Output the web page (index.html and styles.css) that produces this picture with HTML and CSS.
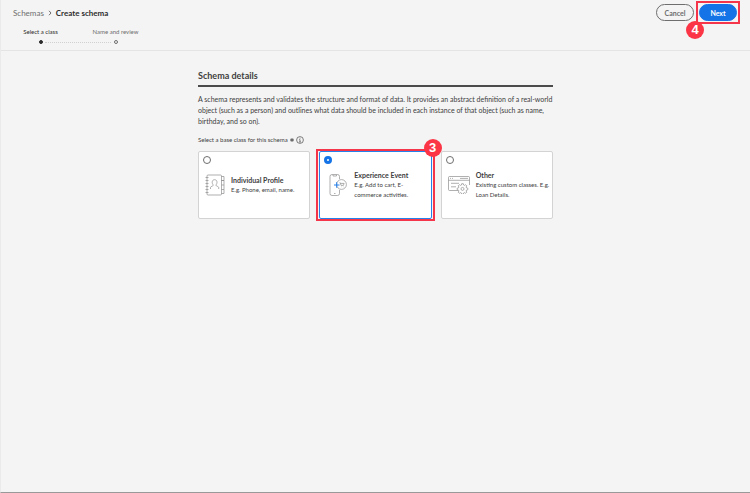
FILE: index.html
```html
<!DOCTYPE html>
<html lang="en">
<head>
    <meta charset="UTF-8">
    <meta name="viewport" content="width=device-width, initial-scale=1.0">
    <title>Create schema</title>
    <link rel="stylesheet" href="styles.css">
</head>
<body>
    <header class="header">
        <div>
            <nav class="breadcrumbs">
                <a href="#">Schemas</a>
                <svg class="chevron" viewBox="0 0 4 6"><path d="M1 .8 3 3 1 5.2"/></svg>
                <h1>Create schema</h1>
            </nav>
            <ol class="steps">
                <li class="step current">Select a class<span class="dot"></span></li>
                <li class="step">Name and review<span class="dot"></span></li>
            </ol>
        </div>
        <div class="actions">
            <button type="button" class="button">Cancel</button>
            <div class="highlight">
                <button type="button" class="button primary">Next</button>
                <span class="badge badge-next">4</span>
            </div>
        </div>
    </header>

    <main class="content">
        <h2>Schema details</h2>
        <p class="intro">A schema represents and validates the structure and format of data. It provides an abstract definition of a real-world object (such as a person) and outlines what data should be included in each instance of that object (such as name, birthday, and so on).</p>

        <form>
            <div class="field-label" id="classLabel">
                Select a base class for this schema
                <svg class="required" viewBox="0 0 4 4"><path d="M2 0v4M.2 1.200l3.600 1.600M3.800 1.200.2 2.800"/></svg>
                <svg class="info" viewBox="0 0 8 8"><circle cx="4" cy="4" r="3.4"/><path d="M4 3.6V6M3.3 3.6H4M3.2 6h1.6M4 1.8v.8"/></svg>
            </div>
            <div class="cards" role="radiogroup" aria-labelledby="classLabel">
                <label class="card">
                    <input type="radio" name="class" value="profile">
                    <span class="card-body">
                        <svg class="icon icon-profile" viewBox="0 0 20 22">
                            <rect x="2" y="1" width="14.5" height="20" rx="1"/>
                            <path d="M.5 3.5h3M.5 6.5h3M.5 9.5h3M.5 12.5h3M.5 15.5h3M.5 18.5h3"/>
                            <path d="M16.5 2.500h2.500v4h-2.500M16.500 6.500h2.500v4.500h-2.500M19 11v4.500h-2.500M19 15.500v4h-2.500"/>
                            <path d="M5.500 15v-1.500c0-1.200 2.700-1.200 2.700-2.200 0-.8-1-1.300-1-3 0-1.600.9-2.600 2.400-2.600s2.400 1 2.400 2.600c0 1.700-1 2.200-1 3 0 1 2.700 1 2.700 2.200V15"/>
                        </svg>
                        <span>
                            <strong>Individual Profile</strong>
                            <span class="description">E.g. Phone, email, name.</span>
                        </span>
                    </span>
                </label>
                <div class="selected">
                    <label class="card">
                        <input type="radio" name="class" value="event" checked>
                        <span class="card-body">
                            <svg class="icon icon-event" viewBox="0 0 18 22">
                                <path d="M10.500 5V2.500Q10.500.5 8.500.5H3Q1 .5 1 2.500v17q0 2 2 2h5.500q2 0 2-2V16"/>
                                <path d="M4 1v1h3.500V1M5 19.500h1.500"/>
                                <circle cx="12.500" cy="10.500" r="4.900"/>
                                <path d="M10.500 8.800h.8l.7 2.600h2.400l.7-2h-3.400M12.200 12.900h.4M14 12.900h.4"/>
                                <path class="plus" d="M5 11h5.500M7.700 8.200v5.600"/>
                            </svg>
                            <span>
                                <strong>Experience Event</strong>
                                <span class="description">E.g. Add to cart, E-commerce activities.</span>
                            </span>
                        </span>
                    </label>
                    <span class="badge badge-card">3</span>
                </div>
                <label class="card">
                    <input type="radio" name="class" value="other">
                    <span class="card-body">
                        <svg class="icon icon-other" viewBox="0 0 22 18">
                            <path d="M10 14.500H1.500q-1 0-1-1V1.500q0-1 1-1h19q1 0 1 1V9M.5 4.300h21M2 2.400h1M4 2.400h1M12 2.400h8M3 7.300h8M3 10.800h5"/>
                            <circle cx="14.500" cy="12.900" r="1.500"/>
                            <path d="M13.700 8.700h1.600l.3 1.300.9.400 1.200-.7 1.100 1.100-.7 1.200.4.900 1.300.3v1.600l-1.300.3-.4.900.7 1.200-1.100 1.100-1.200-.7-.9.400-.3 1.300h-1.600l-.3-1.300-.9-.4-1.200.7-1.100-1.100.7-1.200-.4-.9-1.300-.3v-1.600l1.300-.3.4-.9-.7-1.200 1.100-1.100 1.200.7.900-.4z" transform="translate(0 -1)"/>
                        </svg>
                        <span>
                            <strong>Other</strong>
                            <span class="description">Existing custom classes. E.g. Loan Details.</span>
                        </span>
                    </span>
                </label>
            </div>
        </form>
    </main>
</body>
</html>
```
FILE: styles.css
```css
* {
    box-sizing: border-box;
}

body {
    margin: 0;
    min-height: 100vh;
    font-family: Lato, "Open Sans", sans-serif;
    font-size: 6px;
    line-height: 10px;
    color: #404040;
    background-color: #f4f4f4;
    border-left: 1px solid #eaeaea;
    border-bottom: 1px solid #999;
}

h1, h2, p, ol {
    margin: 0;
    padding: 0;
}

svg {
    fill: none;
    stroke: #6e6e6e;
    flex-shrink: 0;
}

/* Header */
.header {
    display: flex;
    justify-content: space-between;
    height: 51px;
    border-bottom: 1px solid #e4e4e4;
}

.breadcrumbs {
    display: flex;
    align-items: center;
    gap: 4px;
    padding: 8px 0 0 12px;
    font-size: 8px;
}

.breadcrumbs a {
    color: #6e6e6e;
    text-decoration: none;
}

.breadcrumbs h1 {
    font-size: 8px;
    color: #2c2c2c;
}

.chevron {
    width: 4px;
    height: 6px;
}

.steps {
    display: flex;
    list-style: none;
    padding: 9px 0 0 2px;
}

.step {
    position: relative;
    width: 75px;
    text-align: center;
    color: #6e6e6e;
}

.step.current {
    color: #2c2c2c;
}

.dot {
    display: block;
    width: 4px;
    height: 4px;
    margin: 3px auto 0;
    border: 1px solid #6e6e6e;
    border-radius: 50%;
}

.current .dot {
    background-color: #2c2c2c;
    border-color: #2c2c2c;
}

/* dotted track to the next step */
.current::after {
    content: "";
    position: absolute;
    left: 42px;
    bottom: 1px;
    width: 66px;
    border-top: 1px dotted #d0d0d0;
}

.actions {
    display: flex;
    align-items: flex-start;
    gap: 2px;
    padding: 1px 10px 0 0;
}

.button {
    display: block;
    width: 38px;
    height: 17px;
    padding: 0;
    font-family: inherit;
    font-size: 7px;
    font-weight: bold;
    line-height: 10px;
    color: #6e6e6e;
    background-color: transparent;
    border: 1px solid #6e6e6e;
    border-radius: 9px;
    cursor: pointer;
}

.actions > .button {
    margin-top: 3px;
}

.primary {
    color: white;
    background-color: #1473e6;
    border-color: #1473e6;
}

/* Red callouts */
.highlight {
    position: relative;
    padding: 1px;
    border: 2px solid #f5364a;
}

.badge {
    position: absolute;
    width: 18px;
    height: 18px;
    border-radius: 50%;
    background-color: #fb3545;
    color: white;
    font-family: "Liberation Sans", Arial, sans-serif;
    font-size: 13px;
    font-weight: bold;
    line-height: 18px;
    text-align: center;
}

.badge-next {
    left: -12px;
    top: 18px;
}

.badge-card {
    right: -10px;
    top: -12px;
}

/* Content */
.content {
    max-width: 355px;
    margin: 0 auto;
    padding-top: 18px;
}

.content h2 {
    padding-bottom: 2px;
    font-size: 9px;
    line-height: 14px;
    border-bottom: 2px solid #4b4b4b;
}

.intro {
    padding-top: 7px;
    font-size: 7px;
    line-height: 11px;
}

.field-label {
    display: flex;
    align-items: center;
    gap: 2px;
    padding: 8px 0 6px;
}

.required {
    width: 4px;
    height: 4px;
    stroke: #4b4b4b;
    stroke-width: 0.8;
}

.info {
    width: 8px;
    height: 8px;
    stroke: #4b4b4b;
    stroke-width: 0.7;
}

.cards {
    display: grid;
    grid-template-columns: repeat(3, 1fr);
    gap: 9px;
}

.card {
    display: block;
    height: 68px;
    padding: 4px 2px 4px 4px;
    background-color: white;
    border: 1px solid #d3d3d3;
    border-radius: 2px;
    cursor: pointer;
}

.card input {
    appearance: none;
    display: block;
    width: 8px;
    height: 8px;
    margin: 0;
    border: 1px solid #6e6e6e;
    border-radius: 50%;
}

.card input:checked {
    border: 3px solid #1473e6;
}

.selected {
    position: relative;
}

.selected .card {
    border-color: #2680eb;
}

.selected::before {
    content: "";
    position: absolute;
    inset: -2px -3px;
    border: 2px solid #f5364a;
}

.card-body {
    display: flex;
    align-items: center;
    gap: 6px;
    height: 42px;
    padding-left: 2px;
}

.card-body strong, .description {
    display: block;
}

.card-body strong {
    font-size: 7px;
}

.icon {
    stroke: #8e8e8e;
    stroke-width: 0.7;
}

.icon-profile {
    width: 20px;
    height: 22px;
}

.icon-event {
    width: 18px;
    height: 22px;
    margin: 0 1px 0 3px;
}

.icon-other {
    width: 22px;
    height: 18px;
}

.plus {
    stroke: #2680eb;
    stroke-width: 1;
}
```
